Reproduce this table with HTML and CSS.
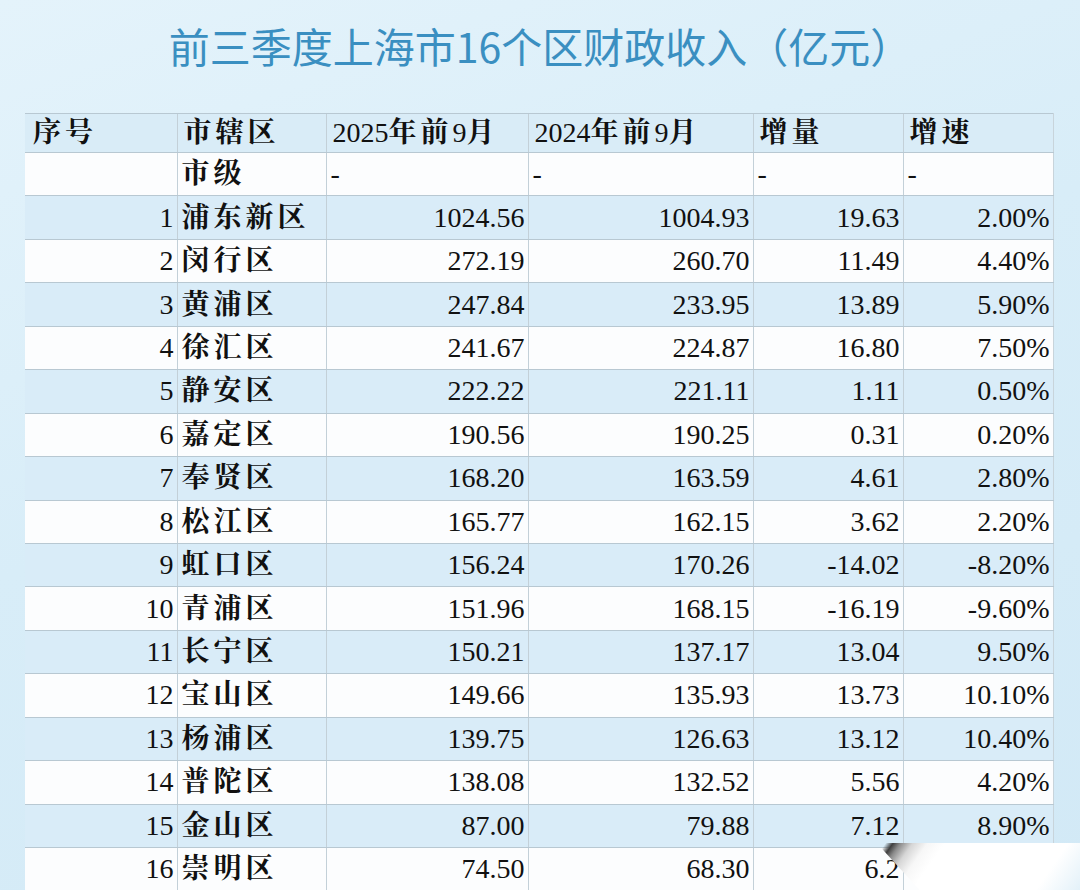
FILE: index.html
```html
<!DOCTYPE html>
<html lang="zh">
<head>
<meta charset="utf-8">
<link rel="stylesheet" href="styles.css">
</head>
<body>
<div class="page">
  <h1 class="title">前三季度上海市16个区财政收入（亿元）</h1>
  <table class="grid">
    <colgroup>
      <col class="c1"><col class="c2"><col class="c3"><col class="c4"><col class="c5"><col class="c6">
    </colgroup>
    <thead>
      <tr class="head">
        <th><span class="zh">序号</span></th>
        <th><span class="zh">市辖区</span></th>
        <th>2025<span class="zh">年前</span>9<span class="zh">月</span></th>
        <th>2024<span class="zh">年前</span>9<span class="zh">月</span></th>
        <th><span class="zh">增量</span></th>
        <th><span class="zh">增速</span></th>
      </tr>
    </thead>
    <tbody>
      <tr class="city">
        <td></td><td class="name"><span class="zh">市级</span></td><td class="dash">-</td><td class="dash">-</td><td class="dash">-</td><td class="dash">-</td>
      </tr>
      <tr class="odd"><td class="num">1</td><td class="name"><span class="zh">浦东新区</span></td><td class="num">1024.56</td><td class="num">1004.93</td><td class="num">19.63</td><td class="num">2.00%</td></tr>
      <tr><td class="num">2</td><td class="name"><span class="zh">闵行区</span></td><td class="num">272.19</td><td class="num">260.70</td><td class="num">11.49</td><td class="num">4.40%</td></tr>
      <tr class="odd"><td class="num">3</td><td class="name"><span class="zh">黄浦区</span></td><td class="num">247.84</td><td class="num">233.95</td><td class="num">13.89</td><td class="num">5.90%</td></tr>
      <tr><td class="num">4</td><td class="name"><span class="zh">徐汇区</span></td><td class="num">241.67</td><td class="num">224.87</td><td class="num">16.80</td><td class="num">7.50%</td></tr>
      <tr class="odd"><td class="num">5</td><td class="name"><span class="zh">静安区</span></td><td class="num">222.22</td><td class="num">221.11</td><td class="num">1.11</td><td class="num">0.50%</td></tr>
      <tr><td class="num">6</td><td class="name"><span class="zh">嘉定区</span></td><td class="num">190.56</td><td class="num">190.25</td><td class="num">0.31</td><td class="num">0.20%</td></tr>
      <tr class="odd"><td class="num">7</td><td class="name"><span class="zh">奉贤区</span></td><td class="num">168.20</td><td class="num">163.59</td><td class="num">4.61</td><td class="num">2.80%</td></tr>
      <tr><td class="num">8</td><td class="name"><span class="zh">松江区</span></td><td class="num">165.77</td><td class="num">162.15</td><td class="num">3.62</td><td class="num">2.20%</td></tr>
      <tr class="odd"><td class="num">9</td><td class="name"><span class="zh">虹口区</span></td><td class="num">156.24</td><td class="num">170.26</td><td class="num">-14.02</td><td class="num">-8.20%</td></tr>
      <tr><td class="num">10</td><td class="name"><span class="zh">青浦区</span></td><td class="num">151.96</td><td class="num">168.15</td><td class="num">-16.19</td><td class="num">-9.60%</td></tr>
      <tr class="odd"><td class="num">11</td><td class="name"><span class="zh">长宁区</span></td><td class="num">150.21</td><td class="num">137.17</td><td class="num">13.04</td><td class="num">9.50%</td></tr>
      <tr><td class="num">12</td><td class="name"><span class="zh">宝山区</span></td><td class="num">149.66</td><td class="num">135.93</td><td class="num">13.73</td><td class="num">10.10%</td></tr>
      <tr class="odd"><td class="num">13</td><td class="name"><span class="zh">杨浦区</span></td><td class="num">139.75</td><td class="num">126.63</td><td class="num">13.12</td><td class="num">10.40%</td></tr>
      <tr><td class="num">14</td><td class="name"><span class="zh">普陀区</span></td><td class="num">138.08</td><td class="num">132.52</td><td class="num">5.56</td><td class="num">4.20%</td></tr>
      <tr class="odd"><td class="num">15</td><td class="name"><span class="zh">金山区</span></td><td class="num">87.00</td><td class="num">79.88</td><td class="num">7.12</td><td class="num">8.90%</td></tr>
      <tr><td class="num">16</td><td class="name"><span class="zh">崇明区</span></td><td class="num">74.50</td><td class="num">68.30</td><td class="num">6.2</td><td class="num"></td></tr>
    </tbody>
  </table>
  <div class="curl"></div>
</div>
</body>
</html>
```

FILE: styles.css
```css
html, body {
  margin: 0;
  padding: 0;
}
body {
  width: 1080px;
  height: 890px;
  overflow: hidden;
  background: linear-gradient(160deg, #e4f3fb 0%, #d8edf8 45%, #d2e9f6 100%);
}
.page {
  position: relative;
  width: 1080px;
  height: 890px;
  overflow: hidden;
}
.title {
  margin: 0;
  padding-top: 21px;
  height: 90px;
  box-sizing: border-box;
  text-align: center;
  font-family: "Noto Sans CJK SC", "Noto Sans", sans-serif;
  font-weight: 400;
  font-size: 41px;
  line-height: 48px;
  color: #3a8fc1;
}
.grid {
  margin-top: 23px;
  margin-left: 25px;
  border-collapse: collapse;
  table-layout: fixed;
  width: 1028px;
  font-family: "Liberation Serif", "Noto Serif CJK SC", "Noto Sans CJK SC", serif;
  font-size: 28px;
  color: #111;
}
.c1 { width: 152px; }
.c2 { width: 149px; }
.c3 { width: 202px; }
.c4 { width: 225px; }
.c5 { width: 150px; }
.c6 { width: 150px; }
.grid th, .grid td {
  padding: 0 3px 0 4px;
  border-left: 1px solid #c3d0d8;
  border-top: 1px solid #b8c8d2;
  border-bottom: 1px solid #b8c8d2;
  white-space: nowrap;
  overflow: hidden;
  line-height: 32px;
  vertical-align: middle;
}
.grid tr > :first-child { border-left: none; }
.grid tr > :last-child { border-right: 1px solid #c8d4db; }
.grid th {
  height: 38px;
  text-align: left;
  font-weight: 400;
  padding-left: 6px;
}
.grid thead tr > :first-child { padding-left: 8px; }
.head { background: #d9ecf7; }
.city td { height: 41px; background: #fcfdfe; }
.grid tbody tr td { height: 42.45px; }
.grid tbody tr { background: #fcfdfe; }
.grid tbody tr.odd { background: #d9ecf8; }
.zh {
  font-weight: 700;
  letter-spacing: 4px;
}
.num { text-align: right; padding-right: 2px; }
.name { text-align: left; padding-left: 3px; }
.dash { text-align: left; padding-left: 4px; }
.curl {
  position: absolute;
  left: 866px;
  top: 843px;
  width: 214px;
  height: 47px;
  background: linear-gradient(125deg, rgba(255,255,255,0) 0%, rgba(255,255,255,0) 8%, #3f3f3f 11%, #8a8a8a 14%, #d6d6d6 19%, #f7f7f7 25%, #ffffff 32%, #ffffff 82%, #e3f1f9 100%);
  clip-path: polygon(5% 0, 100% 0, 100% 100%, 25% 100%);
}
```
